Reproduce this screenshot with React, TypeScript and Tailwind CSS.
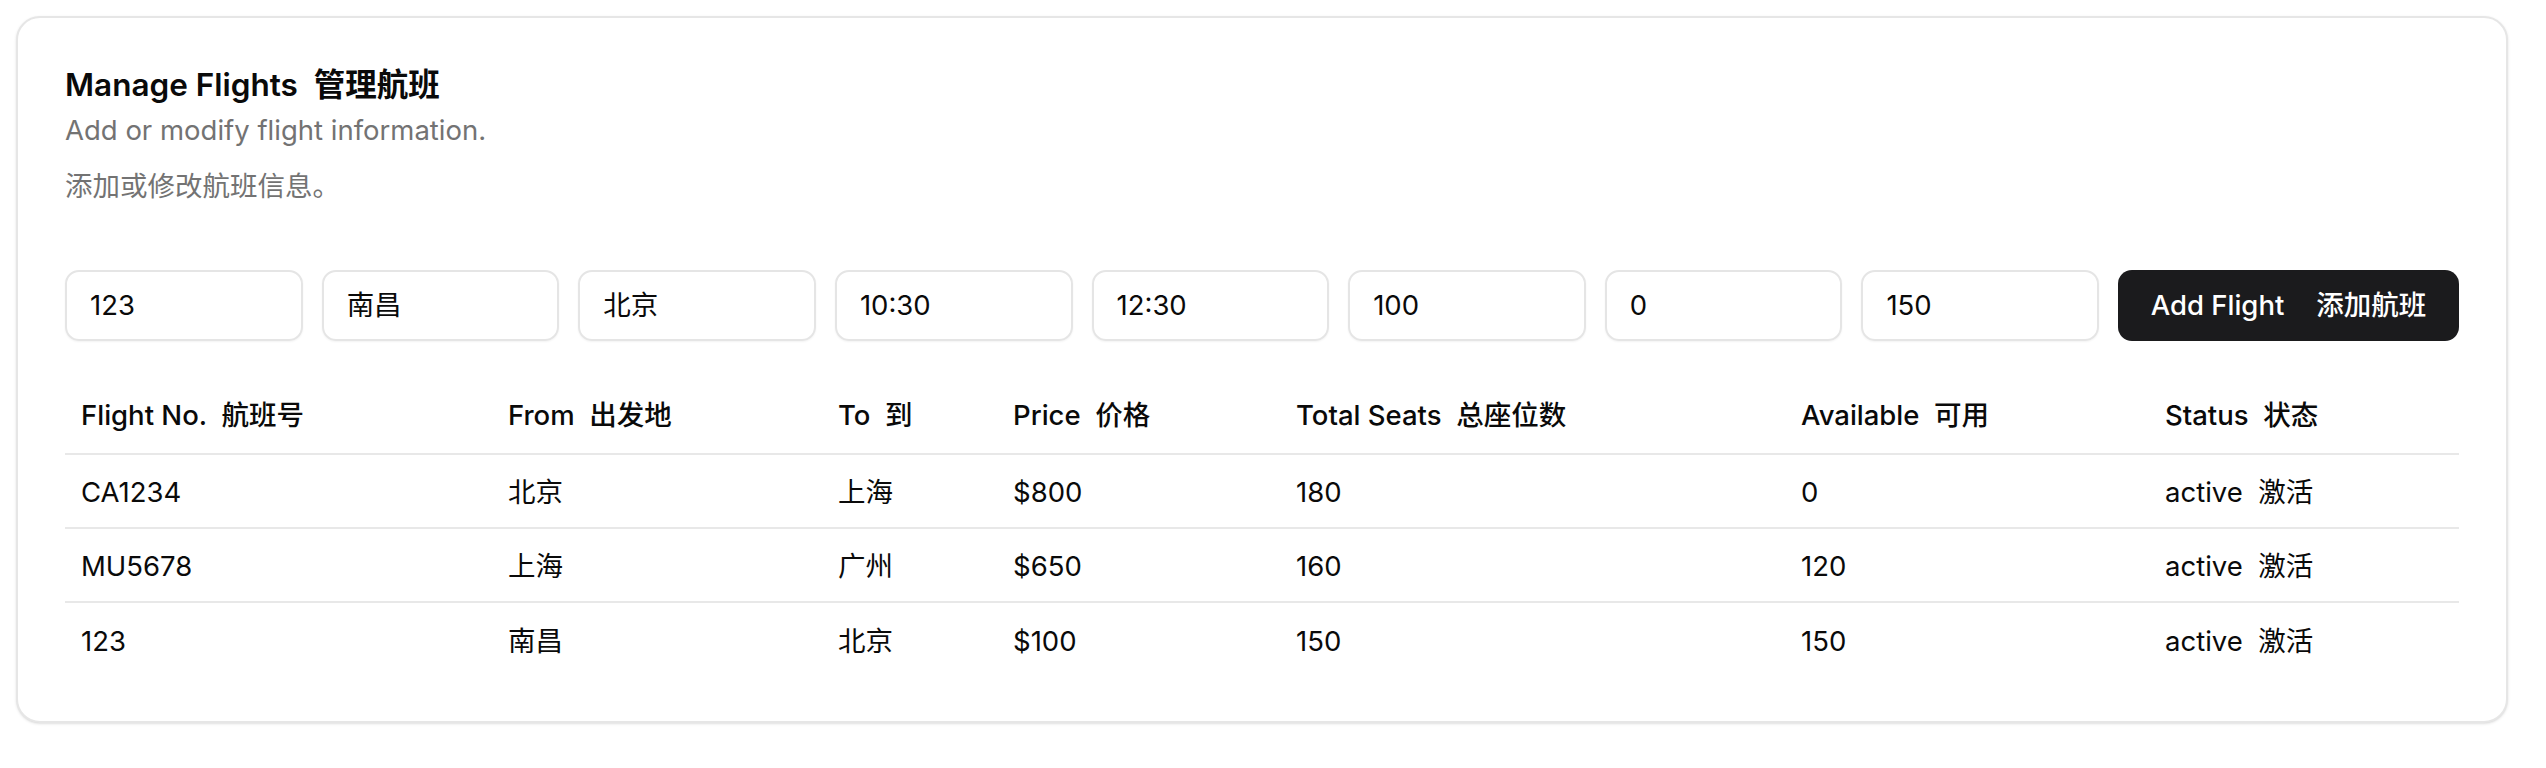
import React from "react";

const inputs = ["123", "南昌", "北京", "10:30", "12:30", "100", "0", "150"];

const cols = [
  { en: "Flight No.", zh: "航班号", w: "w-[427px]" },
  { en: "From", zh: "出发地", w: "w-[330px]" },
  { en: "To", zh: "到", w: "w-[175px]" },
  { en: "Price", zh: "价格", w: "w-[283px]" },
  { en: "Total Seats", zh: "总座位数", w: "w-[505px]" },
  { en: "Available", zh: "可用", w: "w-[364px]" },
  { en: "Status", zh: "状态", w: "flex-1" },
];

const rows = [
  ["CA1234", "北京", "上海", "$800", "180", "0", "active  激活"],
  ["MU5678", "上海", "广州", "$650", "160", "120", "active  激活"],
  ["123", "南昌", "北京", "$100", "150", "150", "active  激活"],
];

export default function App() {
  return (
    <div
      className="w-[2546px] h-[768px] bg-white pl-4 pt-4"
      style={{ fontFamily: 'Inter, "Noto Sans CJK SC", sans-serif' }}
    >
      <div className="w-[2492px] h-[707px] rounded-[24px] border-2 border-[#e6e6e6] bg-white shadow-sm px-[47px] pt-[47px] text-[#0a0a0a]">
        <div className="h-[40px] flex items-center text-[31.5px] font-semibold leading-[40px] whitespace-pre">
          {"Manage Flights  管理航班"}
        </div>
        <div className="mt-[6px] h-[38px] flex items-center text-[27.5px] leading-[38px] text-[#737373]">
          Add or modify flight information.
        </div>
        <div className="mt-[18px] h-[38px] flex items-center text-[27.5px] leading-[38px] text-[#737373]">
          添加或修改航班信息。
        </div>

        <div className="mt-[65px] flex gap-[19px] h-[71px]">
          {inputs.map((v, i) => (
            <div
              key={i}
              className="flex-1 min-w-0 h-full rounded-[14px] border-2 border-[#e5e5e5] shadow-xs flex items-center pl-[23px] text-[27.5px]"
            >
              {v}
            </div>
          ))}
          <button className="w-[341px] h-full rounded-[14px] bg-[#1b1b1d] text-white text-[27.5px] font-medium flex items-center justify-center gap-[32px]">
            <span>Add Flight</span>
            <span>添加航班</span>
          </button>
        </div>

        <div className="mt-[32px]">
          <div className="flex h-[82px] items-center pt-[6px] border-b-2 border-[#e8e8e8] text-[27.5px] font-medium">
            {cols.map((c, i) => (
              <div key={i} className={`${c.w} px-4 whitespace-pre`}>
                {c.en + "  " + c.zh}
              </div>
            ))}
          </div>
          {rows.map((r, ri) => (
            <div
              key={ri}
              className={`flex h-[74px] items-center pt-[3px] text-[27.5px] ${
                ri < rows.length - 1 ? "border-b-2 border-[#e8e8e8]" : ""
              }`}
            >
              {r.map((cell, ci) => (
                <div key={ci} className={`${cols[ci].w} px-4 whitespace-pre`}>
                  {cell}
                </div>
              ))}
            </div>
          ))}
        </div>
      </div>
    </div>
  );
}
